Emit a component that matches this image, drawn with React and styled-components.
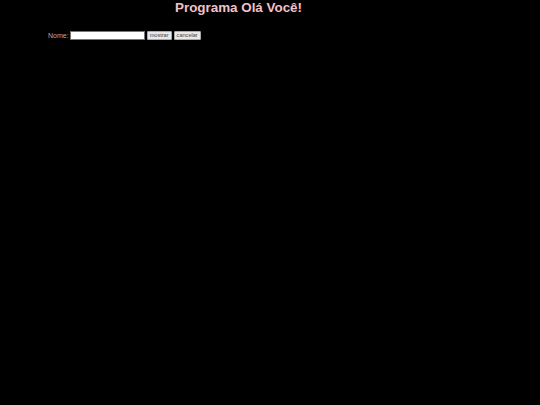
import React, { useState } from 'react';
import styled, { createGlobalStyle } from 'styled-components';

const GlobalStyle = createGlobalStyle`
  html, body {
    margin: 0;
    padding: 0;
    background: #000;
  }
  body {
    font-family: "Liberation Sans", Arial, sans-serif;
  }
`;

const Page = styled.div`
  width: 540px;
  height: 405px;
  background: #000;
`;

const Header = styled.h1`
  width: 477px;
  margin: 0;
  text-align: center;
  font-size: 13.4px;
  line-height: 15px;
  font-weight: bold;
  color: #f3c1c9;
`;

const Form = styled.form`
  display: flex;
  align-items: center;
  margin: 16px 0 0 48px;
`;

const Label = styled.label`
  font-size: 7px;
  color: #c4a2aa;
  margin-right: 1px;
`;

const Input = styled.input`
  box-sizing: border-box;
  width: 75px;
  height: 9px;
  margin: 0;
  padding: 0 2px;
  border: 1px solid #767676;
  background: #fff;
  font-size: 6px;
`;

const Button = styled.button`
  box-sizing: border-box;
  height: 9px;
  margin: 0 0 0 ${p => p.$gap}px;
  padding: 0 2px;
  border: 1px solid #a8a8a8;
  border-radius: 1px;
  background: #e8e8e8;
  color: #444;
  font-family: "Liberation Sans", Arial, sans-serif;
  font-size: 5.6px;
  line-height: 7px;
`;

export default function App() {
  const [nome, setNome] = useState('');
  return (
    <Page>
      <GlobalStyle />
      <Header>Programa Olá Você!</Header>
      <Form onSubmit={e => e.preventDefault()}>
        <Label htmlFor="nome">Nome:</Label>
        <Input id="nome" value={nome} onChange={e => setNome(e.target.value)} />
        <Button type="button" $gap={2}>mostrar</Button>
        <Button type="button" $gap={2}>cancelar</Button>
      </Form>
    </Page>
  );
}
